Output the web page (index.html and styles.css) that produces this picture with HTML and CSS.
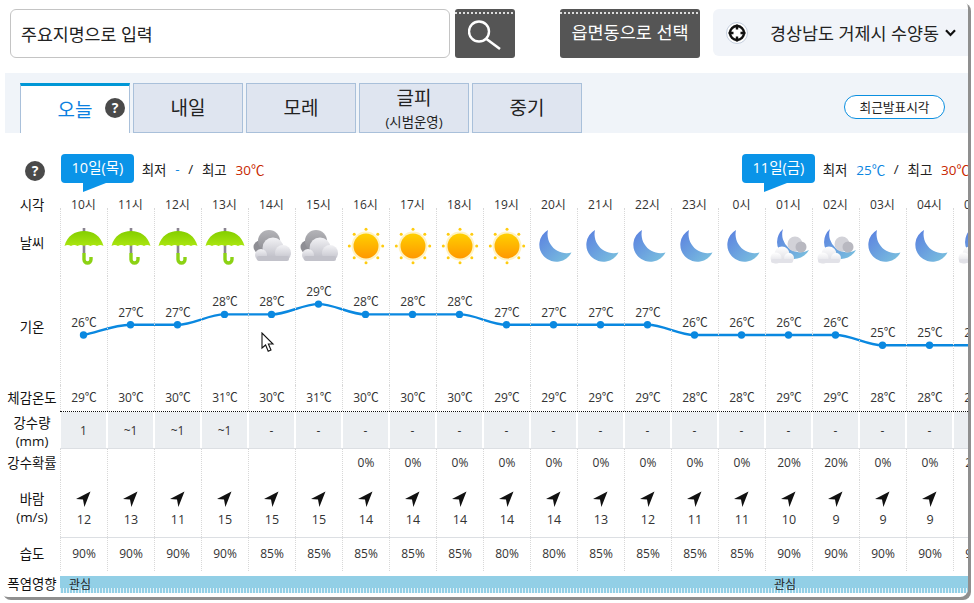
FILE: index.html
```html
<!DOCTYPE html>
<html lang="ko">
<head>
    <meta charset="UTF-8">
    <meta name="viewport" content="width=device-width, initial-scale=1.0">
    <title>동네예보</title>
    <link rel="stylesheet" href="styles.css">
</head>
<body>

    <!-- icon sheet -->
    <svg class="icon-defs" xmlns="http://www.w3.org/2000/svg">
        <defs>
            <linearGradient id="g-canopy" x1="0" y1="0" x2="0" y2="1">
                <stop offset="0" stop-color="#84ce00"/>
                <stop offset="1" stop-color="#aae610"/>
            </linearGradient>
            <linearGradient id="g-sun" x1="0" y1="0" x2="0" y2="1">
                <stop offset="0" stop-color="#ffd000"/>
                <stop offset="1" stop-color="#ff9800"/>
            </linearGradient>
            <linearGradient id="g-moon" x1="0" y1="0" x2="1" y2="1">
                <stop offset="0" stop-color="#5a7fe0"/>
                <stop offset="1" stop-color="#7cc4de"/>
            </linearGradient>
            <linearGradient id="g-back" x1="0" y1="0" x2="0" y2="1">
                <stop offset="0" stop-color="#b4b4b8"/>
                <stop offset="1" stop-color="#8c8c92"/>
            </linearGradient>
            <linearGradient id="g-front" x1="0" y1="0" x2="0" y2="1">
                <stop offset="0" stop-color="#f2f2f5"/>
                <stop offset="1" stop-color="#bdbdc6"/>
            </linearGradient>
            <linearGradient id="g-white" x1="0" y1="0" x2="0" y2="1">
                <stop offset="0" stop-color="#ffffff"/>
                <stop offset="1" stop-color="#dcdce2"/>
            </linearGradient>
        </defs>
        <symbol id="i-rain" viewBox="0 0 40 40">
            <rect x="18.7" y="2" width="2.6" height="25" fill="#8a8490"/>
            <path d="M20 27 V33.5 a3.5 3.5 0 0 0 7 0 V31" fill="none" stroke="#8cd214" stroke-width="3.4"/>
            <path d="M.5 20 C3 10 11 5 20 5 C29 5 37 10 39.5 20 q-3.2 -2 -6.5 0 q-3.3 -2 -6.5 0 q-3.3 -2 -6.5 0 q-3.2 -2 -6.5 0 q-3.3 -2 -6.5 0 q-3.2 -2 -6.5 0 Z" fill="url(#g-canopy)"/>
        </symbol>
        <symbol id="i-cloud" viewBox="0 0 40 40">
            <circle cx="8" cy="21" r="6.5" fill="#8e8e94"/>
            <circle cx="17" cy="15" r="11" fill="url(#g-back)"/>
            <circle cx="21" cy="22" r="10.5" fill="url(#g-front)"/>
            <circle cx="9" cy="29" r="6" fill="url(#g-front)"/>
            <circle cx="31" cy="27" r="8" fill="url(#g-front)"/>
            <rect x="5" y="30" width="32" height="5" rx="2" fill="#c2c2ca"/>
        </symbol>
        <symbol id="i-sun" viewBox="0 0 40 40">
            <circle cx="20" cy="20" r="14.5" fill="#fff3c4"/>
            <circle cx="20" cy="20" r="12.5" fill="url(#g-sun)"/>
            <g fill="#ffcc10">
                <circle cx="20" cy="3.3" r="1.5"/>
                <circle cx="20" cy="36.7" r="1.5"/>
                <circle cx="3.3" cy="20" r="1.5"/>
                <circle cx="36.7" cy="20" r="1.5"/>
                <circle cx="8.2" cy="8.2" r="1.5"/>
                <circle cx="31.8" cy="8.2" r="1.5"/>
                <circle cx="8.2" cy="31.8" r="1.5"/>
                <circle cx="31.8" cy="31.8" r="1.5"/>
            </g>
        </symbol>
        <symbol id="i-moon" viewBox="0 0 40 40">
            <path d="M14 4 A17 17 0 1 0 37.5 26.5 A19 19 0 0 1 14 4 Z" fill="url(#g-moon)"/>
        </symbol>
        <symbol id="i-mooncloud" viewBox="0 0 40 40">
            <path d="M14 3 A17 17 0 1 0 40 24 A18 18 0 0 1 14 3 Z" fill="url(#g-moon)"/>
            <circle cx="26" cy="18" r="7.5" fill="#d2d2d8"/>
            <circle cx="32" cy="21" r="5.5" fill="#b8b8c0"/>
            <circle cx="13" cy="28" r="7.5" fill="url(#g-white)"/>
            <circle cx="7" cy="32" r="5.5" fill="url(#g-white)"/>
            <circle cx="20" cy="32" r="5" fill="url(#g-white)"/>
            <rect x="2" y="33" width="22" height="4" rx="2" fill="#e2e2e8"/>
        </symbol>
        <symbol id="i-wind" viewBox="0 0 16 16">
            <path d="M14.5 .5 L0 8 L7 8.6 L8.4 16 Z" fill="#111"/>
        </symbol>
    </svg>

    <div class="window">

        <div class="topbar">
            <div class="search-box">주요지명으로 입력</div>
            <div class="search-btn dark-btn">
                <svg width="34" height="34" viewBox="0 0 34 34">
                    <circle cx="11" cy="14.5" r="10" fill="none" stroke="#fff" stroke-width="2.4"/>
                    <path d="M18.5 22 L32 32" stroke="#fff" stroke-width="2.6"/>
                </svg>
            </div>
            <div class="select-btn dark-btn">읍면동으로 선택</div>
            <div class="region">
                <svg class="target" width="22" height="22" viewBox="0 0 22 22">
                    <circle cx="11" cy="11" r="10.5" fill="#fff" stroke="#c4cede"/>
                    <circle cx="11" cy="11" r="7" fill="none" stroke="#111" stroke-width="2.4"/>
                    <path d="M11 2.5 V7.5 M11 14.5 V19.5 M2.5 11 H7.5 M14.5 11 H19.5" stroke="#111" stroke-width="2.4"/>
                </svg>
                <span class="region-name">경상남도 거제시 수양동</span>
                <svg width="11" height="8" viewBox="0 0 11 8">
                    <path d="M1 1.2 L5.5 6 L10 1.2" fill="none" stroke="#111" stroke-width="2.2"/>
                </svg>
            </div>
        </div>

        <div class="nav">
            <div class="tab active">오늘<span class="help tab-help">?</span></div>
            <div class="tab">내일</div>
            <div class="tab">모레</div>
            <div class="tab tab-two">글피<small>(시범운영)</small></div>
            <div class="tab">중기</div>
            <div class="latest-btn">최근발표시각</div>
        </div>

        <div class="day-row">
            <span class="help day-help">?</span>
            <div class="day first-day">
                <span class="bubble">10일(목)</span>
                <span>최저</span><span class="low">-</span><span>/</span><span>최고</span><span class="high">30℃</span>
            </div>
            <div class="day">
                <span class="bubble">11일(금)</span>
                <span>최저</span><span class="low">25℃</span><span>/</span><span>최고</span><span class="high">30℃</span>
            </div>
        </div>

        <div class="row row-time">
            <div class="row-label">시각</div>
            <div class="cells" id="time"></div>
        </div>
        <div class="row row-sky">
            <div class="row-label">날씨</div>
            <div class="cells" id="sky"></div>
        </div>
        <div class="row row-temp">
            <div class="row-label">기온</div>
            <div class="cells" id="temp">
                <svg class="chart" id="chart" width="940" height="109"></svg>
                <svg class="cursor" width="14" height="21" viewBox="0 0 14 21">
                    <path d="M1 1 V16 L4.6 13 L7.2 19.2 L10 18 L7.4 12 H12 Z" fill="#fff" stroke="#111" stroke-width="1.1"/>
                </svg>
            </div>
        </div>
        <div class="row row-feel">
            <div class="row-label">체감온도</div>
            <div class="cells" id="feel"></div>
        </div>
        <div class="row row-rain">
            <div class="row-label">강수량<br>(mm)</div>
            <div class="cells" id="rain"></div>
        </div>
        <div class="row row-prob">
            <div class="row-label">강수확률</div>
            <div class="cells" id="prob"></div>
        </div>
        <div class="row row-wind">
            <div class="row-label">바람<br>(m/s)</div>
            <div class="cells" id="wind"></div>
        </div>
        <div class="row row-hum">
            <div class="row-label">습도</div>
            <div class="cells" id="hum"></div>
        </div>
        <div class="row row-heat">
            <div class="row-label">폭염영향</div>
            <div class="heat-bar"><span class="heat-first">관심</span><span>관심</span></div>
        </div>

    </div>

    <script src="script.js"></script>

</body>
</html>
```

FILE: styles.css
```css
* {
    box-sizing: border-box;
}

html, body {
    margin: 0;
    height: 100%;
    overflow: hidden;
    background-color: white;
}

body {
    font-family: "Open Sans", "Noto Sans CJK KR", sans-serif;
    font-size: 12px;
    color: #222;
}

.icon-defs {
    position: absolute;
    width: 0;
    height: 0;
}

.window {
    width: 968px;
    height: 597px;
    overflow: hidden;
    background-color: white;
    border-radius: 0 8px 8px 8px;
    box-shadow: 3px 3px 0 #8f8f8f;
}

/* top bar */
.topbar {
    display: flex;
    height: 58px;
    padding: 9px 0 0 10px;
}

.search-box {
    width: 440px;
    height: 49px;
    padding-left: 10px;
    border: 1px solid #c4c4c4;
    border-radius: 6px;
    font-size: 17.3px;
    line-height: 49px;
    color: #222;
}

.dark-btn {
    height: 49px;
    border-radius: 3px;
    color: white;
    background-color: #555;
    background-image: repeating-linear-gradient(90deg, #ddd 0 2px, transparent 2px 4px);
    background-size: 100% 2px;
    background-position: 0 3px;
    background-repeat: no-repeat;
}

.search-btn {
    display: flex;
    align-items: center;
    justify-content: center;
    width: 60px;
    margin-left: 5px;
}

.select-btn {
    width: 140px;
    margin-left: 45px;
    font-size: 17.5px;
    line-height: 47px;
    text-align: center;
}

.region {
    display: flex;
    align-items: center;
    width: 255px;
    height: 47px;
    margin-left: 13px;
    padding-left: 13px;
    background-color: #f1f4f9;
    border-radius: 6px 0 0 6px;
}

.region-name {
    margin: 0 6px 0 22px;
    font-size: 17.4px;
    white-space: nowrap;
    color: #222;
}

/* tabs */
.nav {
    display: flex;
    gap: 3px;
    height: 60px;
    margin: 15px 0 0 5px;
    padding: 10px 0 0 15px;
    background-color: #f0f4f9;
}

.tab {
    position: relative;
    display: flex;
    flex-direction: column;
    align-items: center;
    justify-content: center;
    width: 110px;
    height: 50px;
    font-size: 19px;
    line-height: 24px;
    background-color: #dfe5f0;
    border: 1px solid #a9c0da;
}

.tab small {
    margin-top: 6px;
    font-size: 13.4px;
    line-height: 16px;
}

.tab-two {
    line-height: 20px;
    padding-top: 2px;
}

.tab.active {
    color: #0b80e0;
    background-color: white;
    border-top: 3px solid #0097d6;
    border-bottom: none;
}

.help {
    display: block;
    width: 20px;
    height: 20px;
    border-radius: 50%;
    background-color: #4a4a4a;
    color: white;
    font-size: 14px;
    font-weight: bold;
    line-height: 20px;
    text-align: center;
}

.tab-help {
    position: absolute;
    right: 4px;
    top: 12px;
}

.latest-btn {
    width: 101px;
    height: 24px;
    margin: 12px 0 0 259px;
    border: 1px solid #0b8fe0;
    border-radius: 12px;
    background-color: white;
    font-size: 12.7px;
    line-height: 22px;
    text-align: center;
}

/* day summary */
.day-row {
    display: flex;
    height: 62px;
    padding: 21px 0 0 25px;
    font-size: 13.5px;
}

.day-help {
    flex: none;
    margin: 7px 16px 0 0;
}

.day {
    flex: none;
    display: flex;
    align-items: center;
    gap: 8.7px;
    height: 29px;
    white-space: nowrap;
    color: #222;
}

.first-day {
    width: 681px;
}

.bubble {
    position: relative;
    width: 73px;
    height: 29px;
    margin-right: -1px;
    border-radius: 4px;
    background-color: #0a94e8;
    color: white;
    font-size: 14.5px;
    line-height: 28px;
    text-align: center;
}

.bubble::after {
    content: "";
    position: absolute;
    left: 22px;
    top: 100%;
    width: 23px;
    height: 9px;
    background-color: #0a94e8;
    clip-path: polygon(0 0, 100% 0, 0 100%);
}

.low {
    color: #0b85e0;
}

.high {
    color: #c82800;
}

/* forecast table */
.row {
    display: flex;
}

.row-label {
    flex: none;
    width: 60px;
    padding-left: 4px;
    font-size: 13.4px;
    line-height: 18px;
    text-align: center;
    color: #111;
}

.cells {
    position: relative;
    display: flex;
}

.cell {
    flex: none;
    width: 47px;
    line-height: 16px;
    text-align: center;
    border-left: 1px dotted #d8d8d8;
    color: #333;
}

.cell svg {
    display: block;
    margin: 0 auto;
}

.row-time {
    height: 13px;
}

.row-time .row-label {
    line-height: 20px;
}

.row-time .cell {
    border-left: none;
    line-height: 20px;
}

.row-sky {
    height: 68px;
}

.row-sky .row-label {
    padding-top: 26px;
}

.row-sky .cell {
    height: 68px;
    padding-top: 18px;
}

.row-temp {
    height: 109px;
}

.row-temp .row-label {
    padding-top: 42px;
}

.row-temp .cell {
    height: 109px;
    position: relative;
    z-index: 1;
}

.chart {
    position: absolute;
    left: 0;
    top: 0;
}

.cursor {
    position: absolute;
    left: 201px;
    top: 56px;
    z-index: 2;
}

.row-feel {
    height: 27px;
}

.row-feel .row-label {
    padding-top: 4px;
}

.row-feel .cell {
    height: 26px;
    line-height: 26px;
}

.row-feel .cells {
    height: 27px;
    border-bottom: 1px dotted #111;
}

.row-rain {
    height: 37px;
}

.row-rain .row-label {
    padding-top: 2px;
}

.row-rain .cells {
    border-bottom: 1px solid #dcdfe3;
}

.row-rain .cell {
    height: 36px;
    line-height: 38px;
    background-color: #ebeef1;
    border-left: 1px solid white;
    border-right: 1px solid white;
}

.row-prob {
    height: 31px;
}

.row-prob .row-label {
    padding-top: 5px;
}

.row-prob .cell {
    height: 31px;
    padding-top: 6px;
}

.row-wind {
    height: 58px;
}

.row-wind .row-label {
    padding-top: 10px;
}

.row-wind .cells {
    height: 58px;
    border-bottom: 1px solid #dcdfe3;
}

.row-wind .cell {
    height: 57px;
    padding-top: 11px;
}

.row-wind .cell span {
    display: block;
    margin-top: 5px;
    font-size: 12.5px;
}

.row-hum {
    height: 38px;
}

.row-hum .row-label {
    padding-top: 7px;
}

.row-hum .cell {
    height: 33px;
    padding-top: 8px;
}

.row-heat {
    height: 17px;
}

.row-heat .row-label {
    line-height: 17px;
}

.heat-bar {
    display: flex;
    width: 908px;
    height: 17px;
    padding-left: 9px;
    font-size: 12px;
    line-height: 17px;
    color: #222;
    background-color: #92cfe6;
    background-image: repeating-linear-gradient(90deg, rgba(255, 255, 255, 0.75) 0 1px, transparent 1px 3px);
    background-size: 100% 5px;
    background-position: 0 100%;
    background-repeat: no-repeat;
}

.heat-first {
    width: 705px;
}
```

FILE: script.js
```js
const hours = ['10시', '11시', '12시', '13시', '14시', '15시', '16시', '17시', '18시', '19시', '20시', '21시', '22시', '23시', '0시', '01시', '02시', '03시', '04시', '05시'];
const sky = ['rain', 'rain', 'rain', 'rain', 'cloud', 'cloud', 'sun', 'sun', 'sun', 'sun', 'moon', 'moon', 'moon', 'moon', 'moon', 'mooncloud', 'mooncloud', 'moon', 'moon', 'mooncloud'];
const temps = [26, 27, 27, 28, 28, 29, 28, 28, 28, 27, 27, 27, 27, 26, 26, 26, 26, 25, 25, 25];
const feels = [29, 30, 30, 31, 30, 31, 30, 30, 30, 29, 29, 29, 29, 28, 28, 29, 29, 28, 28, 28];
const rain = ['1', '~1', '~1', '~1', '-', '-', '-', '-', '-', '-', '-', '-', '-', '-', '-', '-', '-', '-', '-', '-'];
const prob = ['', '', '', '', '', '', 0, 0, 0, 0, 0, 0, 0, 0, 0, 20, 20, 0, 0, 20];
const wind = [12, 13, 11, 15, 15, 15, 14, 14, 14, 14, 14, 13, 12, 11, 11, 10, 9, 9, 9, 9];
const hum = [90, 90, 90, 90, 85, 85, 85, 85, 85, 80, 80, 85, 85, 85, 85, 90, 90, 90, 90, 90];

const COL = 47;

function fill(id, values, render) {
    const row = document.getElementById(id);
    values.forEach(function (value) {
        const cell = document.createElement('div');
        cell.className = 'cell';
        cell.innerHTML = render(value);
        row.appendChild(cell);
    });
}

function icon(name, size) {
    return '<svg width="' + size + '" height="' + size + '"><use href="#i-' + name + '"/></svg>';
}

function pointY(t) {
    return 59 - (t - 26) * 10.3;
}

fill('time', hours, function (v) { return v; });
fill('sky', sky, function (v) { return icon(v, 40); });
fill('feel', feels, function (v) { return v + '℃'; });
fill('rain', rain, function (v) { return v; });
fill('prob', prob, function (v) { return v === '' ? '' : v + '%'; });
fill('wind', wind, function (v) { return icon('wind', 16) + '<span>' + v + '</span>'; });
fill('hum', hum, function (v) { return v + '%'; });

// temperature labels sit just above their point on the line
fill('temp', temps, function (v) { return v + '℃'; });
document.querySelectorAll('#temp .cell').forEach(function (cell, i) {
    cell.style.paddingTop = (pointY(temps[i]) - 20) + 'px';
});

// monotone line through the hourly points
const pts = temps.map(function (t, i) {
    return { x: 23.5 + i * COL, y: pointY(t) };
});
const slopes = pts.map(function (p, i) {
    if (i === 0) return (pts[1].y - p.y) / COL;
    if (i === pts.length - 1) return 0;
    const a = (p.y - pts[i - 1].y) / COL;
    const b = (pts[i + 1].y - p.y) / COL;
    return a * b <= 0 ? 0 : 2 * a * b / (a + b);
});

let d = 'M' + pts[0].x + ' ' + pts[0].y;
for (let i = 1; i < pts.length; i++) {
    const step = COL / 3;
    d += ' C' + (pts[i - 1].x + step) + ' ' + (pts[i - 1].y + slopes[i - 1] * step) +
        ' ' + (pts[i].x - step) + ' ' + (pts[i].y - slopes[i] * step) +
        ' ' + pts[i].x + ' ' + pts[i].y;
}

let chart = '<path d="' + d + '" fill="none" stroke="#0a88e0" stroke-width="2.4"/>';
pts.forEach(function (p) {
    chart += '<circle cx="' + p.x + '" cy="' + p.y + '" r="3.7" fill="#0a88e0"/>';
});
document.getElementById('chart').innerHTML = chart;
```
